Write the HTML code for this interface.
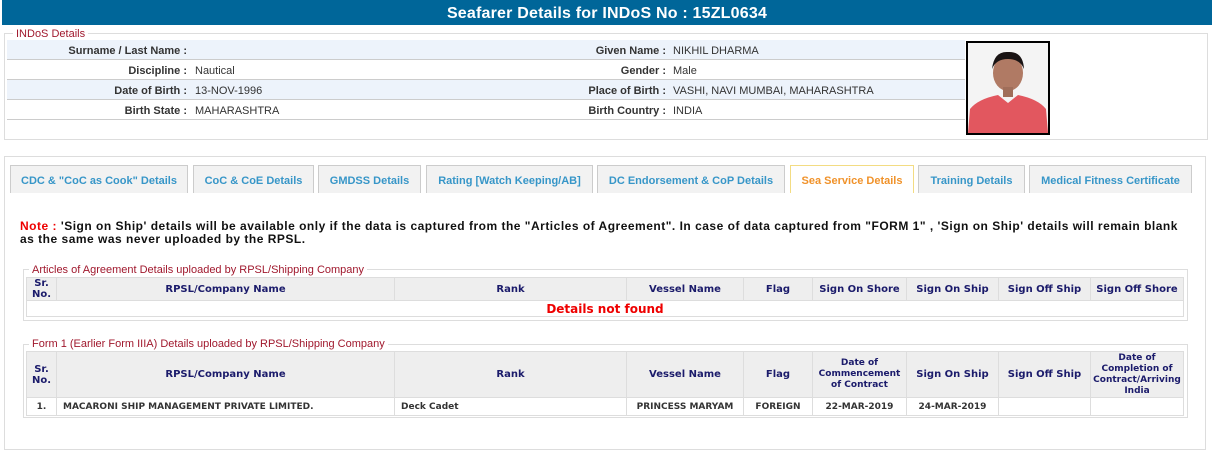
<!DOCTYPE html>
<html><head><meta charset="utf-8"><style>
*{margin:0;padding:0;box-sizing:border-box}
body{width:1212px;height:456px;background:#fff;position:relative;font-family:"Liberation Sans",Arial,sans-serif;overflow:hidden}
.abs{position:absolute}
.hdr{left:2px;top:0;width:1210px;height:25px;background:#006699;color:#fff;font-weight:bold;font-size:16px;text-align:center;line-height:27px;letter-spacing:.2px}
.fs{border:1px solid #ddd}
.lg{background:#fff;color:#a0182d;font-size:11px;padding:0 3px;line-height:12px}
.row{left:7px;width:958px;height:20px;border-bottom:1px solid #ccc;font-size:11px;color:#333;line-height:22px}
.row.a{background:#edf3fb}
.l{position:absolute;text-align:right;font-weight:bold;color:#333}
.v{position:absolute}
.tab{top:165px;height:28px;background:#f2f2f2;border:1px solid #ccc;border-bottom:none;font-size:11px;font-weight:bold;text-align:center;line-height:30px;color:#3796c8}
.tab.on{background:#fff;border-color:#f3dc83;color:#f0922a}
table{border-collapse:collapse;table-layout:fixed;position:absolute;font-size:10px;font-weight:bold;font-family:"DejaVu Sans",Verdana,sans-serif}
td,th{border:1px solid #ddd;text-align:center;padding:0;overflow:hidden}
th{background:#eee;color:#1b1b6b;font-size:10px;line-height:11px}
th.s{font-size:9px}
td{color:#333;font-size:9px}
</style></head><body>
<div class="abs hdr">Seafarer Details for INDoS No : 15ZL0634</div>
<div class="abs fs" style="left:4px;top:33px;width:1204px;height:107px"></div>
<div class="abs lg" style="left:13px;top:28px">INDoS Details</div>

<div class="abs row a" style="top:40px"><span class="l" style="left:0;width:180px">Surname / Last Name :</span><span class="l" style="left:480px;width:179px">Given Name :</span><span class="v" style="left:666px">NIKHIL DHARMA</span></div>
<div class="abs row" style="top:60px"><span class="l" style="left:0;width:180px">Discipline :</span><span class="v" style="left:188px">Nautical</span><span class="l" style="left:480px;width:179px">Gender :</span><span class="v" style="left:666px">Male</span></div>
<div class="abs row a" style="top:80px"><span class="l" style="left:0;width:180px">Date of Birth :</span><span class="v" style="left:188px">13-NOV-1996</span><span class="l" style="left:480px;width:179px">Place of Birth :</span><span class="v" style="left:666px">VASHI, NAVI MUMBAI, MAHARASHTRA</span></div>
<div class="abs row" style="top:100px"><span class="l" style="left:0;width:180px">Birth State :</span><span class="v" style="left:188px">MAHARASHTRA</span><span class="l" style="left:480px;width:179px">Birth Country :</span><span class="v" style="left:666px">INDIA</span></div>

<div class="abs" style="left:966px;top:41px;width:84px;height:94px;border:2px solid #000;background:#f4f4f4;overflow:hidden">
<svg width="80" height="90"><ellipse cx="40" cy="30" rx="15" ry="18" fill="#b07a64"/><path d="M24 26 Q26 8 40 9 Q55 8 56 26 Q52 16 40 16 Q28 16 24 26Z" fill="#1a1414"/><path d="M0 90 L2 66 Q10 56 30 52 L40 60 L50 52 Q70 56 78 66 L80 90Z" fill="#e2575f"/><rect x="35" y="44" width="10" height="10" fill="#a06e5a"/></svg></div>

<div class="abs fs" style="left:4px;top:156px;width:1202px;height:294px"></div>
<div class="abs tab" style="left:10px;width:178px">CDC &amp; "CoC as Cook" Details</div>
<div class="abs tab" style="left:193px;width:121px">CoC &amp; CoE Details</div>
<div class="abs tab" style="left:318px;width:103px">GMDSS Details</div>
<div class="abs tab" style="left:426px;width:167px">Rating [Watch Keeping/AB]</div>
<div class="abs tab" style="left:597px;width:188px">DC Endorsement &amp; CoP Details</div>
<div class="abs tab on" style="left:790px;width:124px">Sea Service Details</div>
<div class="abs tab" style="left:918px;width:107px">Training Details</div>
<div class="abs tab" style="left:1029px;width:163px">Medical Fitness Certificate</div>

<div class="abs" style="left:20px;top:220px;width:1175px;font-size:12px;font-weight:bold;line-height:13px;color:#111;letter-spacing:.5px"><span style="color:#e00">Note :</span> 'Sign on Ship' details will be available only if the data is captured from the "Articles of Agreement". In case of data captured from "FORM 1" , 'Sign on Ship' details will remain blank as the same was never uploaded by the RPSL.</div>

<div class="abs fs" style="left:23px;top:269px;width:1165px;height:52px"></div>
<div class="abs lg" style="left:29px;top:264px">Articles of Agreement Details uploaded by RPSL/Shipping Company</div>
<table style="left:26px;top:277px;width:1158px">
<tr style="height:22px"><th style="width:30px">Sr.<br>No.</th><th style="width:338px">RPSL/Company Name</th><th style="width:232px">Rank</th><th style="width:117px">Vessel Name</th><th style="width:69px">Flag</th><th style="width:94px">Sign On Shore</th><th style="width:92px">Sign On Ship</th><th style="width:92px">Sign Off Ship</th><th>Sign Off Shore</th></tr>
<tr style="height:16px"><td colspan="9" style="color:#e00;font-size:12px">Details not found</td></tr>
</table>

<div class="abs fs" style="left:23px;top:344px;width:1165px;height:74px"></div>
<div class="abs lg" style="left:29px;top:338px">Form 1 (Earlier Form IIIA) Details uploaded by RPSL/Shipping Company</div>
<table style="left:26px;top:351px;width:1158px">
<tr style="height:46px"><th style="width:30px">Sr.<br>No.</th><th style="width:338px">RPSL/Company Name</th><th style="width:232px">Rank</th><th style="width:117px">Vessel Name</th><th style="width:69px">Flag</th><th class="s" style="width:94px">Date of Commencement of Contract</th><th style="width:92px">Sign On Ship</th><th style="width:92px">Sign Off Ship</th><th class="s">Date of Completion of Contract/Arriving India</th></tr>
<tr style="height:18px"><td>1.</td><td style="text-align:left;padding-left:6px">MACARONI SHIP MANAGEMENT PRIVATE LIMITED.</td><td style="text-align:left;padding-left:6px">Deck Cadet</td><td>PRINCESS MARYAM</td><td>FOREIGN</td><td>22-MAR-2019</td><td>24-MAR-2019</td><td></td><td></td></tr>
</table>
</body></html>
